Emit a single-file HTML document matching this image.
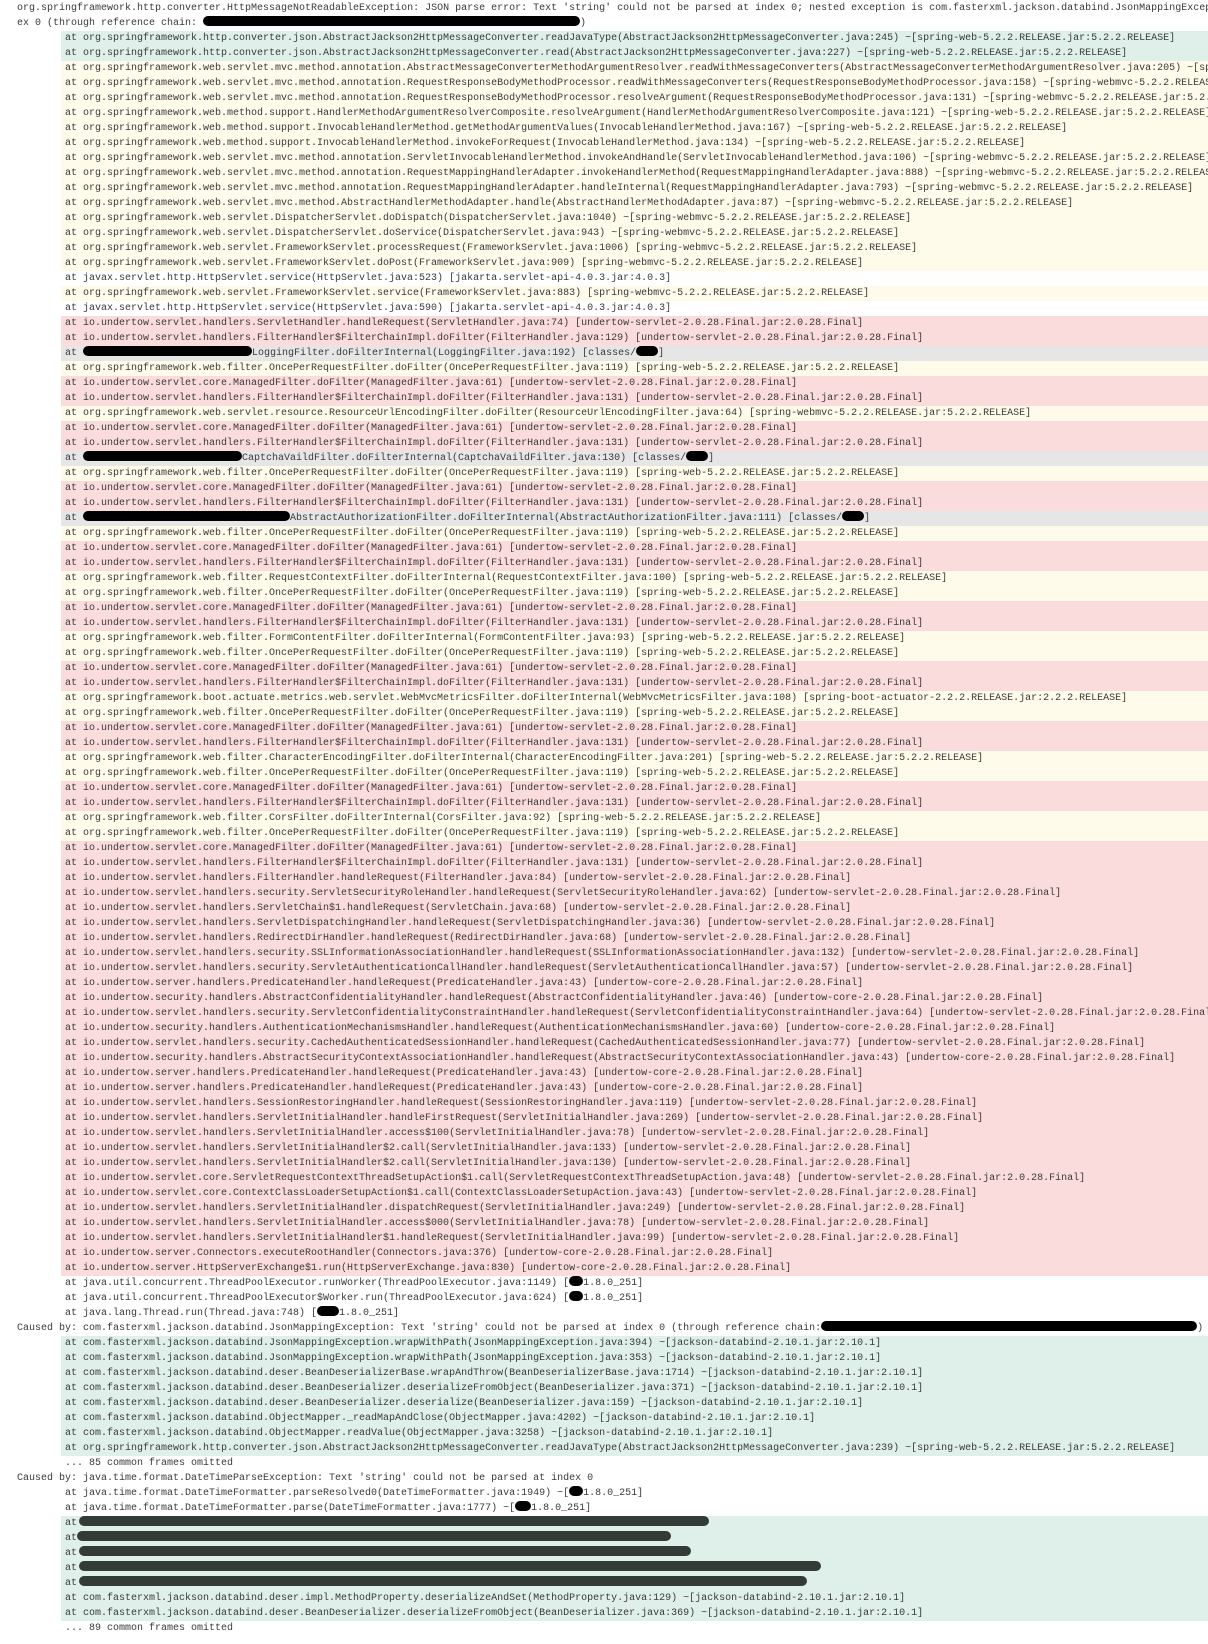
<!DOCTYPE html>
<html><head><meta charset="utf-8">
<style>
html,body{margin:0;padding:0;background:#fff;}
body{width:1208px;height:1644px;overflow:hidden;font-family:"Liberation Mono",monospace;font-size:10px;color:#3a3a3a;padding-top:1px;box-sizing:border-box;}
.l{height:15px;line-height:15px;white-space:pre;overflow:hidden;}
.p{padding-left:17px;}
.a{margin-left:61px;padding-left:4px;}
.t{background:#dff0ea;}
.y{background:#fffbea;}
.r{background:#fbdcdc;}
.g{background:#e6e6e6;}
.x{display:inline-block;height:10px;background:#000;border-radius:5px;vertical-align:-1px;}
.d{display:inline-block;height:10px;background:#333b37;border-radius:5px;vertical-align:-1px;}
</style></head><body>
<div class="l p">org.springframework.http.converter.HttpMessageNotReadableException: JSON parse error: Text 'string' could not be parsed at index 0; nested exception is com.fasterxml.jackson.databind.JsonMappingException: Text 'string' could not be parsed at index 0</div>
<div class="l p">ex 0 (through reference chain: <span class="x" style="width:377px"></span>)</div>
<div class="l a t">at org.springframework.http.converter.json.AbstractJackson2HttpMessageConverter.readJavaType(AbstractJackson2HttpMessageConverter.java:245) ~[spring-web-5.2.2.RELEASE.jar:5.2.2.RELEASE]</div>
<div class="l a t">at org.springframework.http.converter.json.AbstractJackson2HttpMessageConverter.read(AbstractJackson2HttpMessageConverter.java:227) ~[spring-web-5.2.2.RELEASE.jar:5.2.2.RELEASE]</div>
<div class="l a y">at org.springframework.web.servlet.mvc.method.annotation.AbstractMessageConverterMethodArgumentResolver.readWithMessageConverters(AbstractMessageConverterMethodArgumentResolver.java:205) ~[spring-webmvc-5.2.2.RELEASE.jar:5.2.2.RELEASE]</div>
<div class="l a y">at org.springframework.web.servlet.mvc.method.annotation.RequestResponseBodyMethodProcessor.readWithMessageConverters(RequestResponseBodyMethodProcessor.java:158) ~[spring-webmvc-5.2.2.RELEASE.jar:5.2.2.RELEASE]</div>
<div class="l a y">at org.springframework.web.servlet.mvc.method.annotation.RequestResponseBodyMethodProcessor.resolveArgument(RequestResponseBodyMethodProcessor.java:131) ~[spring-webmvc-5.2.2.RELEASE.jar:5.2.2.RELEASE]</div>
<div class="l a y">at org.springframework.web.method.support.HandlerMethodArgumentResolverComposite.resolveArgument(HandlerMethodArgumentResolverComposite.java:121) ~[spring-web-5.2.2.RELEASE.jar:5.2.2.RELEASE]</div>
<div class="l a y">at org.springframework.web.method.support.InvocableHandlerMethod.getMethodArgumentValues(InvocableHandlerMethod.java:167) ~[spring-web-5.2.2.RELEASE.jar:5.2.2.RELEASE]</div>
<div class="l a y">at org.springframework.web.method.support.InvocableHandlerMethod.invokeForRequest(InvocableHandlerMethod.java:134) ~[spring-web-5.2.2.RELEASE.jar:5.2.2.RELEASE]</div>
<div class="l a y">at org.springframework.web.servlet.mvc.method.annotation.ServletInvocableHandlerMethod.invokeAndHandle(ServletInvocableHandlerMethod.java:106) ~[spring-webmvc-5.2.2.RELEASE.jar:5.2.2.RELEASE]</div>
<div class="l a y">at org.springframework.web.servlet.mvc.method.annotation.RequestMappingHandlerAdapter.invokeHandlerMethod(RequestMappingHandlerAdapter.java:888) ~[spring-webmvc-5.2.2.RELEASE.jar:5.2.2.RELEASE]</div>
<div class="l a y">at org.springframework.web.servlet.mvc.method.annotation.RequestMappingHandlerAdapter.handleInternal(RequestMappingHandlerAdapter.java:793) ~[spring-webmvc-5.2.2.RELEASE.jar:5.2.2.RELEASE]</div>
<div class="l a y">at org.springframework.web.servlet.mvc.method.AbstractHandlerMethodAdapter.handle(AbstractHandlerMethodAdapter.java:87) ~[spring-webmvc-5.2.2.RELEASE.jar:5.2.2.RELEASE]</div>
<div class="l a y">at org.springframework.web.servlet.DispatcherServlet.doDispatch(DispatcherServlet.java:1040) ~[spring-webmvc-5.2.2.RELEASE.jar:5.2.2.RELEASE]</div>
<div class="l a y">at org.springframework.web.servlet.DispatcherServlet.doService(DispatcherServlet.java:943) ~[spring-webmvc-5.2.2.RELEASE.jar:5.2.2.RELEASE]</div>
<div class="l a y">at org.springframework.web.servlet.FrameworkServlet.processRequest(FrameworkServlet.java:1006) [spring-webmvc-5.2.2.RELEASE.jar:5.2.2.RELEASE]</div>
<div class="l a y">at org.springframework.web.servlet.FrameworkServlet.doPost(FrameworkServlet.java:909) [spring-webmvc-5.2.2.RELEASE.jar:5.2.2.RELEASE]</div>
<div class="l a">at javax.servlet.http.HttpServlet.service(HttpServlet.java:523) [jakarta.servlet-api-4.0.3.jar:4.0.3]</div>
<div class="l a y">at org.springframework.web.servlet.FrameworkServlet.service(FrameworkServlet.java:883) [spring-webmvc-5.2.2.RELEASE.jar:5.2.2.RELEASE]</div>
<div class="l a">at javax.servlet.http.HttpServlet.service(HttpServlet.java:590) [jakarta.servlet-api-4.0.3.jar:4.0.3]</div>
<div class="l a r">at io.undertow.servlet.handlers.ServletHandler.handleRequest(ServletHandler.java:74) [undertow-servlet-2.0.28.Final.jar:2.0.28.Final]</div>
<div class="l a r">at io.undertow.servlet.handlers.FilterHandler$FilterChainImpl.doFilter(FilterHandler.java:129) [undertow-servlet-2.0.28.Final.jar:2.0.28.Final]</div>
<div class="l a g">at <span class="x" style="width:169px"></span>LoggingFilter.doFilterInternal(LoggingFilter.java:192) [classes/<span class="x" style="width:22px"></span>]</div>
<div class="l a y">at org.springframework.web.filter.OncePerRequestFilter.doFilter(OncePerRequestFilter.java:119) [spring-web-5.2.2.RELEASE.jar:5.2.2.RELEASE]</div>
<div class="l a r">at io.undertow.servlet.core.ManagedFilter.doFilter(ManagedFilter.java:61) [undertow-servlet-2.0.28.Final.jar:2.0.28.Final]</div>
<div class="l a r">at io.undertow.servlet.handlers.FilterHandler$FilterChainImpl.doFilter(FilterHandler.java:131) [undertow-servlet-2.0.28.Final.jar:2.0.28.Final]</div>
<div class="l a y">at org.springframework.web.servlet.resource.ResourceUrlEncodingFilter.doFilter(ResourceUrlEncodingFilter.java:64) [spring-webmvc-5.2.2.RELEASE.jar:5.2.2.RELEASE]</div>
<div class="l a r">at io.undertow.servlet.core.ManagedFilter.doFilter(ManagedFilter.java:61) [undertow-servlet-2.0.28.Final.jar:2.0.28.Final]</div>
<div class="l a r">at io.undertow.servlet.handlers.FilterHandler$FilterChainImpl.doFilter(FilterHandler.java:131) [undertow-servlet-2.0.28.Final.jar:2.0.28.Final]</div>
<div class="l a g">at <span class="x" style="width:159px"></span>CaptchaVaildFilter.doFilterInternal(CaptchaVaildFilter.java:130) [classes/<span class="x" style="width:22px"></span>]</div>
<div class="l a y">at org.springframework.web.filter.OncePerRequestFilter.doFilter(OncePerRequestFilter.java:119) [spring-web-5.2.2.RELEASE.jar:5.2.2.RELEASE]</div>
<div class="l a r">at io.undertow.servlet.core.ManagedFilter.doFilter(ManagedFilter.java:61) [undertow-servlet-2.0.28.Final.jar:2.0.28.Final]</div>
<div class="l a r">at io.undertow.servlet.handlers.FilterHandler$FilterChainImpl.doFilter(FilterHandler.java:131) [undertow-servlet-2.0.28.Final.jar:2.0.28.Final]</div>
<div class="l a g">at <span class="x" style="width:207px"></span>AbstractAuthorizationFilter.doFilterInternal(AbstractAuthorizationFilter.java:111) [classes/<span class="x" style="width:22px"></span>]</div>
<div class="l a y">at org.springframework.web.filter.OncePerRequestFilter.doFilter(OncePerRequestFilter.java:119) [spring-web-5.2.2.RELEASE.jar:5.2.2.RELEASE]</div>
<div class="l a r">at io.undertow.servlet.core.ManagedFilter.doFilter(ManagedFilter.java:61) [undertow-servlet-2.0.28.Final.jar:2.0.28.Final]</div>
<div class="l a r">at io.undertow.servlet.handlers.FilterHandler$FilterChainImpl.doFilter(FilterHandler.java:131) [undertow-servlet-2.0.28.Final.jar:2.0.28.Final]</div>
<div class="l a y">at org.springframework.web.filter.RequestContextFilter.doFilterInternal(RequestContextFilter.java:100) [spring-web-5.2.2.RELEASE.jar:5.2.2.RELEASE]</div>
<div class="l a y">at org.springframework.web.filter.OncePerRequestFilter.doFilter(OncePerRequestFilter.java:119) [spring-web-5.2.2.RELEASE.jar:5.2.2.RELEASE]</div>
<div class="l a r">at io.undertow.servlet.core.ManagedFilter.doFilter(ManagedFilter.java:61) [undertow-servlet-2.0.28.Final.jar:2.0.28.Final]</div>
<div class="l a r">at io.undertow.servlet.handlers.FilterHandler$FilterChainImpl.doFilter(FilterHandler.java:131) [undertow-servlet-2.0.28.Final.jar:2.0.28.Final]</div>
<div class="l a y">at org.springframework.web.filter.FormContentFilter.doFilterInternal(FormContentFilter.java:93) [spring-web-5.2.2.RELEASE.jar:5.2.2.RELEASE]</div>
<div class="l a y">at org.springframework.web.filter.OncePerRequestFilter.doFilter(OncePerRequestFilter.java:119) [spring-web-5.2.2.RELEASE.jar:5.2.2.RELEASE]</div>
<div class="l a r">at io.undertow.servlet.core.ManagedFilter.doFilter(ManagedFilter.java:61) [undertow-servlet-2.0.28.Final.jar:2.0.28.Final]</div>
<div class="l a r">at io.undertow.servlet.handlers.FilterHandler$FilterChainImpl.doFilter(FilterHandler.java:131) [undertow-servlet-2.0.28.Final.jar:2.0.28.Final]</div>
<div class="l a y">at org.springframework.boot.actuate.metrics.web.servlet.WebMvcMetricsFilter.doFilterInternal(WebMvcMetricsFilter.java:108) [spring-boot-actuator-2.2.2.RELEASE.jar:2.2.2.RELEASE]</div>
<div class="l a y">at org.springframework.web.filter.OncePerRequestFilter.doFilter(OncePerRequestFilter.java:119) [spring-web-5.2.2.RELEASE.jar:5.2.2.RELEASE]</div>
<div class="l a r">at io.undertow.servlet.core.ManagedFilter.doFilter(ManagedFilter.java:61) [undertow-servlet-2.0.28.Final.jar:2.0.28.Final]</div>
<div class="l a r">at io.undertow.servlet.handlers.FilterHandler$FilterChainImpl.doFilter(FilterHandler.java:131) [undertow-servlet-2.0.28.Final.jar:2.0.28.Final]</div>
<div class="l a y">at org.springframework.web.filter.CharacterEncodingFilter.doFilterInternal(CharacterEncodingFilter.java:201) [spring-web-5.2.2.RELEASE.jar:5.2.2.RELEASE]</div>
<div class="l a y">at org.springframework.web.filter.OncePerRequestFilter.doFilter(OncePerRequestFilter.java:119) [spring-web-5.2.2.RELEASE.jar:5.2.2.RELEASE]</div>
<div class="l a r">at io.undertow.servlet.core.ManagedFilter.doFilter(ManagedFilter.java:61) [undertow-servlet-2.0.28.Final.jar:2.0.28.Final]</div>
<div class="l a r">at io.undertow.servlet.handlers.FilterHandler$FilterChainImpl.doFilter(FilterHandler.java:131) [undertow-servlet-2.0.28.Final.jar:2.0.28.Final]</div>
<div class="l a y">at org.springframework.web.filter.CorsFilter.doFilterInternal(CorsFilter.java:92) [spring-web-5.2.2.RELEASE.jar:5.2.2.RELEASE]</div>
<div class="l a y">at org.springframework.web.filter.OncePerRequestFilter.doFilter(OncePerRequestFilter.java:119) [spring-web-5.2.2.RELEASE.jar:5.2.2.RELEASE]</div>
<div class="l a r">at io.undertow.servlet.core.ManagedFilter.doFilter(ManagedFilter.java:61) [undertow-servlet-2.0.28.Final.jar:2.0.28.Final]</div>
<div class="l a r">at io.undertow.servlet.handlers.FilterHandler$FilterChainImpl.doFilter(FilterHandler.java:131) [undertow-servlet-2.0.28.Final.jar:2.0.28.Final]</div>
<div class="l a r">at io.undertow.servlet.handlers.FilterHandler.handleRequest(FilterHandler.java:84) [undertow-servlet-2.0.28.Final.jar:2.0.28.Final]</div>
<div class="l a r">at io.undertow.servlet.handlers.security.ServletSecurityRoleHandler.handleRequest(ServletSecurityRoleHandler.java:62) [undertow-servlet-2.0.28.Final.jar:2.0.28.Final]</div>
<div class="l a r">at io.undertow.servlet.handlers.ServletChain$1.handleRequest(ServletChain.java:68) [undertow-servlet-2.0.28.Final.jar:2.0.28.Final]</div>
<div class="l a r">at io.undertow.servlet.handlers.ServletDispatchingHandler.handleRequest(ServletDispatchingHandler.java:36) [undertow-servlet-2.0.28.Final.jar:2.0.28.Final]</div>
<div class="l a r">at io.undertow.servlet.handlers.RedirectDirHandler.handleRequest(RedirectDirHandler.java:68) [undertow-servlet-2.0.28.Final.jar:2.0.28.Final]</div>
<div class="l a r">at io.undertow.servlet.handlers.security.SSLInformationAssociationHandler.handleRequest(SSLInformationAssociationHandler.java:132) [undertow-servlet-2.0.28.Final.jar:2.0.28.Final]</div>
<div class="l a r">at io.undertow.servlet.handlers.security.ServletAuthenticationCallHandler.handleRequest(ServletAuthenticationCallHandler.java:57) [undertow-servlet-2.0.28.Final.jar:2.0.28.Final]</div>
<div class="l a r">at io.undertow.server.handlers.PredicateHandler.handleRequest(PredicateHandler.java:43) [undertow-core-2.0.28.Final.jar:2.0.28.Final]</div>
<div class="l a r">at io.undertow.security.handlers.AbstractConfidentialityHandler.handleRequest(AbstractConfidentialityHandler.java:46) [undertow-core-2.0.28.Final.jar:2.0.28.Final]</div>
<div class="l a r">at io.undertow.servlet.handlers.security.ServletConfidentialityConstraintHandler.handleRequest(ServletConfidentialityConstraintHandler.java:64) [undertow-servlet-2.0.28.Final.jar:2.0.28.Final]</div>
<div class="l a r">at io.undertow.security.handlers.AuthenticationMechanismsHandler.handleRequest(AuthenticationMechanismsHandler.java:60) [undertow-core-2.0.28.Final.jar:2.0.28.Final]</div>
<div class="l a r">at io.undertow.servlet.handlers.security.CachedAuthenticatedSessionHandler.handleRequest(CachedAuthenticatedSessionHandler.java:77) [undertow-servlet-2.0.28.Final.jar:2.0.28.Final]</div>
<div class="l a r">at io.undertow.security.handlers.AbstractSecurityContextAssociationHandler.handleRequest(AbstractSecurityContextAssociationHandler.java:43) [undertow-core-2.0.28.Final.jar:2.0.28.Final]</div>
<div class="l a r">at io.undertow.server.handlers.PredicateHandler.handleRequest(PredicateHandler.java:43) [undertow-core-2.0.28.Final.jar:2.0.28.Final]</div>
<div class="l a r">at io.undertow.server.handlers.PredicateHandler.handleRequest(PredicateHandler.java:43) [undertow-core-2.0.28.Final.jar:2.0.28.Final]</div>
<div class="l a r">at io.undertow.servlet.handlers.SessionRestoringHandler.handleRequest(SessionRestoringHandler.java:119) [undertow-servlet-2.0.28.Final.jar:2.0.28.Final]</div>
<div class="l a r">at io.undertow.servlet.handlers.ServletInitialHandler.handleFirstRequest(ServletInitialHandler.java:269) [undertow-servlet-2.0.28.Final.jar:2.0.28.Final]</div>
<div class="l a r">at io.undertow.servlet.handlers.ServletInitialHandler.access$100(ServletInitialHandler.java:78) [undertow-servlet-2.0.28.Final.jar:2.0.28.Final]</div>
<div class="l a r">at io.undertow.servlet.handlers.ServletInitialHandler$2.call(ServletInitialHandler.java:133) [undertow-servlet-2.0.28.Final.jar:2.0.28.Final]</div>
<div class="l a r">at io.undertow.servlet.handlers.ServletInitialHandler$2.call(ServletInitialHandler.java:130) [undertow-servlet-2.0.28.Final.jar:2.0.28.Final]</div>
<div class="l a r">at io.undertow.servlet.core.ServletRequestContextThreadSetupAction$1.call(ServletRequestContextThreadSetupAction.java:48) [undertow-servlet-2.0.28.Final.jar:2.0.28.Final]</div>
<div class="l a r">at io.undertow.servlet.core.ContextClassLoaderSetupAction$1.call(ContextClassLoaderSetupAction.java:43) [undertow-servlet-2.0.28.Final.jar:2.0.28.Final]</div>
<div class="l a r">at io.undertow.servlet.handlers.ServletInitialHandler.dispatchRequest(ServletInitialHandler.java:249) [undertow-servlet-2.0.28.Final.jar:2.0.28.Final]</div>
<div class="l a r">at io.undertow.servlet.handlers.ServletInitialHandler.access$000(ServletInitialHandler.java:78) [undertow-servlet-2.0.28.Final.jar:2.0.28.Final]</div>
<div class="l a r">at io.undertow.servlet.handlers.ServletInitialHandler$1.handleRequest(ServletInitialHandler.java:99) [undertow-servlet-2.0.28.Final.jar:2.0.28.Final]</div>
<div class="l a r">at io.undertow.server.Connectors.executeRootHandler(Connectors.java:376) [undertow-core-2.0.28.Final.jar:2.0.28.Final]</div>
<div class="l a r">at io.undertow.server.HttpServerExchange$1.run(HttpServerExchange.java:830) [undertow-core-2.0.28.Final.jar:2.0.28.Final]</div>
<div class="l a">at java.util.concurrent.ThreadPoolExecutor.runWorker(ThreadPoolExecutor.java:1149) [<span class="x" style="width:14px"></span>1.8.0_251]</div>
<div class="l a">at java.util.concurrent.ThreadPoolExecutor$Worker.run(ThreadPoolExecutor.java:624) [<span class="x" style="width:14px"></span>1.8.0_251]</div>
<div class="l a">at java.lang.Thread.run(Thread.java:748) [<span class="x" style="width:22px"></span>1.8.0_251]</div>
<div class="l p">Caused by: com.fasterxml.jackson.databind.JsonMappingException: Text 'string' could not be parsed at index 0 (through reference chain:<span class="x" style="width:376px"></span>)</div>
<div class="l a t">at com.fasterxml.jackson.databind.JsonMappingException.wrapWithPath(JsonMappingException.java:394) ~[jackson-databind-2.10.1.jar:2.10.1]</div>
<div class="l a t">at com.fasterxml.jackson.databind.JsonMappingException.wrapWithPath(JsonMappingException.java:353) ~[jackson-databind-2.10.1.jar:2.10.1]</div>
<div class="l a t">at com.fasterxml.jackson.databind.deser.BeanDeserializerBase.wrapAndThrow(BeanDeserializerBase.java:1714) ~[jackson-databind-2.10.1.jar:2.10.1]</div>
<div class="l a t">at com.fasterxml.jackson.databind.deser.BeanDeserializer.deserializeFromObject(BeanDeserializer.java:371) ~[jackson-databind-2.10.1.jar:2.10.1]</div>
<div class="l a t">at com.fasterxml.jackson.databind.deser.BeanDeserializer.deserialize(BeanDeserializer.java:159) ~[jackson-databind-2.10.1.jar:2.10.1]</div>
<div class="l a t">at com.fasterxml.jackson.databind.ObjectMapper._readMapAndClose(ObjectMapper.java:4202) ~[jackson-databind-2.10.1.jar:2.10.1]</div>
<div class="l a t">at com.fasterxml.jackson.databind.ObjectMapper.readValue(ObjectMapper.java:3258) ~[jackson-databind-2.10.1.jar:2.10.1]</div>
<div class="l a t">at org.springframework.http.converter.json.AbstractJackson2HttpMessageConverter.readJavaType(AbstractJackson2HttpMessageConverter.java:239) ~[spring-web-5.2.2.RELEASE.jar:5.2.2.RELEASE]</div>
<div class="l a">... 85 common frames omitted</div>
<div class="l p">Caused by: java.time.format.DateTimeParseException: Text 'string' could not be parsed at index 0</div>
<div class="l a">at java.time.format.DateTimeFormatter.parseResolved0(DateTimeFormatter.java:1949) ~[<span class="x" style="width:14px"></span>1.8.0_251]</div>
<div class="l a">at java.time.format.DateTimeFormatter.parse(DateTimeFormatter.java:1777) ~[<span class="x" style="width:16px"></span>1.8.0_251]</div>
<div class="l a t">at<span class="d" style="width:630px;margin-left:2px"></span></div>
<div class="l a t">at<span class="d" style="width:594px"></span></div>
<div class="l a t">at<span class="d" style="width:612px;margin-left:2px"></span></div>
<div class="l a t">at<span class="d" style="width:742px;margin-left:2px"></span></div>
<div class="l a t">at<span class="d" style="width:728px;margin-left:2px"></span></div>
<div class="l a t">at com.fasterxml.jackson.databind.deser.impl.MethodProperty.deserializeAndSet(MethodProperty.java:129) ~[jackson-databind-2.10.1.jar:2.10.1]</div>
<div class="l a t">at com.fasterxml.jackson.databind.deser.BeanDeserializer.deserializeFromObject(BeanDeserializer.java:369) ~[jackson-databind-2.10.1.jar:2.10.1]</div>
<div class="l a">... 89 common frames omitted</div>
</body></html>
